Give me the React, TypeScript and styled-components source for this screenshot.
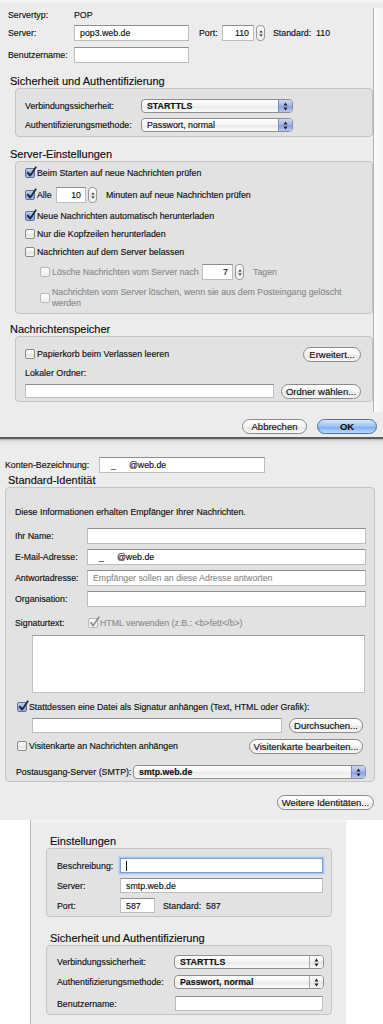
import React from 'react'
import styled, { createGlobalStyle, css } from 'styled-components'

const GlobalStyle = createGlobalStyle`
  html, body {
    margin: 0;
    padding: 0;
    background: #ffffff;
  }
  body {
    font-family: 'Liberation Sans', Arial, sans-serif;
    font-size: 8.8px;
    color: #111111;
    -webkit-text-stroke: 0.15px currentColor;
  }
  * {
    box-sizing: border-box;
  }
`

const Arrows = ({ w = 5, h = 9 }: { w?: number; h?: number }) => (
  <ArrowSvg width={w} height={h} viewBox="0 0 5 9">
    <path d="M2.5 0.6 L4.5 3.4 L0.5 3.4 Z M2.5 8.4 L4.5 5.6 L0.5 5.6 Z" />
  </ArrowSvg>
)

const CheckBox = ({ checked, disabled }: { checked?: boolean; disabled?: boolean }) => (
  <Tick $checked={checked} $disabled={disabled}>
    {checked && (
      <TickMark viewBox="0 0 11 12">
        <path d="M1.8 6.6 L4.2 9.6 L9.8 1.2" />
      </TickMark>
    )}
  </Tick>
)

const Select = ({ w, value, bold, active = true }: { w: number; value: string; bold?: boolean; active?: boolean }) => (
  <Popup $w={w} $bold={bold}>
    <PopupText>{value}</PopupText>
    <PopupCap $active={active}>
      <Arrows />
    </PopupCap>
  </Popup>
)

const Stepper = () => (
  <StepperBox>
    <Arrows w={4} h={9} />
  </StepperBox>
)

// account address with the local part blanked out, as in the screenshot
const Address = () => (
  <>
    <span>_</span>
    <Domain>@web.de</Domain>
  </>
)

export default function App() {
  return (
    <Page>
      <GlobalStyle />

      <Window $h={439} $edge>
        <TopArea>
          <Main>
            <Line>
              <Label $w={66}>Servertyp:</Label>
              <span>POP</span>
            </Line>
            <Line $mt={2}>
              <Label $w={66}>Server:</Label>
              <Field $w={115}>pop3.web.de</Field>
              <Label $w={23} $ml={10}>Port:</Label>
              <Field $w={32} $align="flex-end">110</Field>
              <Stepper />
              <Label $ml={8} $w={43}>Standard:</Label>
              <span>110</span>
            </Line>
            <Line $mt={6}>
              <Label $w={66}>Benutzername:</Label>
              <Field $w={115} />
            </Line>

            <GroupTitle $mt={11} $pl={2}>Sicherheit und Authentifizierung</GroupTitle>
            <GroupBox $ml={7} $w={358} $pt={10} $pb={4} $pl={9}>
              <Line $h={14}>
                <Label $w={116}>Verbindungssicherheit:</Label>
                <Select w={152} value="STARTTLS" bold />
              </Line>
              <Line $h={14} $mt={5}>
                <Label $w={116}>Authentifizierungsmethode:</Label>
                <Select w={152} value="Passwort, normal" />
              </Line>
            </GroupBox>

            <GroupTitle $mt={10} $pl={2}>Server-Einstellungen</GroupTitle>
            <GroupBox $ml={7} $w={358} $pt={3} $pb={4} $pl={9}>
              <Line>
                <CheckBox checked />
                <span>Beim Starten auf neue Nachrichten prüfen</span>
              </Line>
              <Line $mt={6}>
                <CheckBox checked />
                <Label $w={19}>Alle</Label>
                <Field $w={30} $align="flex-end">10</Field>
                <Stepper />
                <Label $ml={9}>Minuten auf neue Nachrichten prüfen</Label>
              </Line>
              <Line $mt={5}>
                <CheckBox checked />
                <span>Neue Nachrichten automatisch herunterladen</span>
              </Line>
              <Line $mt={2}>
                <CheckBox />
                <span>Nur die Kopfzeilen herunterladen</span>
              </Line>
              <Line $mt={2}>
                <CheckBox />
                <span>Nachrichten auf dem Server belassen</span>
              </Line>
              <Line $mt={4} $pl={15} $muted>
                <CheckBox disabled />
                <Label $w={150}>Lösche Nachrichten vom Server nach</Label>
                <Field $w={31} $align="flex-end">7</Field>
                <Stepper />
                <Label $ml={9}>Tagen</Label>
              </Line>
              <Line $mt={7} $h={22} $pl={15} $muted>
                <CheckBox disabled />
                <Wrapped>
                  Nachrichten vom Server löschen, wenn sie aus dem Posteingang gelöscht
                  <br />
                  werden
                </Wrapped>
              </Line>
            </GroupBox>

            <GroupTitle $mt={8} $pl={2}>Nachrichtenspeicher</GroupTitle>
            <GroupBox $ml={7} $w={358} $pt={10} $pb={3} $pl={9} $pr={11}>
              <Line $h={14}>
                <CheckBox />
                <span>Papierkorb beim Verlassen leeren</span>
                <PushButton $w={58} $ml="auto">Erweitert...</PushButton>
              </Line>
              <Line $h={14} $mt={5}>
                <span>Lokaler Ordner:</span>
              </Line>
              <Line $h={14} $mt={4}>
                <Field $w={249} $h={14} />
                <PushButton $w={80} $ml="auto">Ordner wählen...</PushButton>
              </Line>
            </GroupBox>
          </Main>
          <Track />
        </TopArea>

        <ButtonBar>
          <PushButton $w={65}>Abbrechen</PushButton>
          <PushButton $w={60} $primary>OK</PushButton>
        </ButtonBar>
      </Window>

      <Window $h={381} $shade>
        <Line $mt={18} $pl={5}>
          <Label $w={94}>Konten-Bezeichnung:</Label>
          <Field $w={166} $pl={11}>
            <Address />
          </Field>
        </Line>

        <GroupTitle $pl={8}>Standard-Identität</GroupTitle>
        <GroupBox $ml={5} $w={370} $pt={17} $pb={2} $pl={9} $pr={8}>
          <Line $h={14}>
            <span>Diese Informationen erhalten Empfänger Ihrer Nachrichten.</span>
          </Line>
          <Line $mt={9}>
            <Label $w={72}>Ihr Name:</Label>
            <Field $w={279} />
          </Line>
          <Line $mt={5}>
            <Label $w={72}>E-Mail-Adresse:</Label>
            <Field $w={279} $pl={11}>
              <Address />
            </Field>
          </Line>
          <Line $mt={5}>
            <Label $w={72}>Antwortadresse:</Label>
            <Field $w={279}>
              <Hint>Empfänger sollen an diese Adresse antworten</Hint>
            </Field>
          </Line>
          <Line $mt={5}>
            <Label $w={72}>Organisation:</Label>
            <Field $w={279} />
          </Line>
          <Line $h={14} $mt={9}>
            <Label $w={73}>Signaturtext:</Label>
            <CheckBox checked disabled />
            <Hint>HTML verwenden (z.B.: &lt;b&gt;fett&lt;/b&gt;)</Hint>
          </Line>
          <TextArea />
          <Line $h={14} $mt={7} $pl={2}>
            <CheckBox checked />
            <span>Stattdessen eine Datei als Signatur anhängen (Text, HTML oder Grafik):</span>
          </Line>
          <Line $h={15} $mt={4} $pl={17}>
            <Field $w={250} $h={15} />
            <PushButton $w={74} $ml="7px">Durchsuchen...</PushButton>
          </Line>
          <Line $h={14} $mt={6} $pl={2}>
            <CheckBox />
            <span>Visitenkarte an Nachrichten anhängen</span>
            <PushButton $w={114} $ml="auto" $mr={3}>Visitenkarte bearbeiten...</PushButton>
          </Line>
          <Line $h={14} $mt={12} $pl={1}>
            <Label $w={117}>Postausgang-Server (SMTP):</Label>
            <Select w={233} value="smtp.web.de" bold />
          </Line>
        </GroupBox>

        <ButtonBar $mt={13} $pr={9}>
          <PushButton $w={97}>Weitere Identitäten...</PushButton>
        </ButtonBar>
      </Window>

      <Sheet>
        <GroupTitle $pl={19}>Einstellungen</GroupTitle>
        <GroupBox $ml={15} $w={286} $pt={9} $pb={3} $pl={10}>
          <Line $h={15}>
            <Label $w={63}>Beschreibung:</Label>
            <Field $w={203} $h={15} $focus>
              <Caret />
            </Field>
          </Line>
          <Line $h={15} $mt={5}>
            <Label $w={63}>Server:</Label>
            <Field $w={203} $h={15}>smtp.web.de</Field>
          </Line>
          <Line $h={15} $mt={5}>
            <Label $w={63}>Port:</Label>
            <Field $w={35} $h={15}>587</Field>
            <Label $ml={8} $w={43}>Standard:</Label>
            <span>587</span>
          </Line>
        </GroupBox>

        <GroupTitle $mt={14} $pl={19}>Sicherheit und Authentifizierung</GroupTitle>
        <GroupBox $ml={15} $w={286} $pt={9} $pb={3} $pl={10}>
          <Line $h={14}>
            <Label $w={117}>Verbindungssicherheit:</Label>
            <Select w={150} value="STARTTLS" bold active={false} />
          </Line>
          <Line $h={14} $mt={6}>
            <Label $w={117}>Authentifizierungsmethode:</Label>
            <Select w={150} value="Passwort, normal" bold active={false} />
          </Line>
          <Line $h={15} $mt={7}>
            <Label $w={118}>Benutzername:</Label>
            <Field $w={148} $h={15} />
          </Line>
        </GroupBox>
      </Sheet>
    </Page>
  )
}

const Page = styled.div`
  width: 383px;
  height: 1024px;
  overflow: hidden;
  display: flex;
  flex-direction: column;
`

const Window = styled.section<{ $h: number; $edge?: boolean; $shade?: boolean }>`
  flex: none;
  height: ${p => p.$h}px;
  display: flex;
  flex-direction: column;
  background: linear-gradient(#f7f7f7, #ececec 5px);
  ${p =>
    p.$edge &&
    css`
      border-bottom: 2px solid #5b5b5b;
    `}
  ${p =>
    p.$shade &&
    css`
      background: linear-gradient(#b4b4b4, #dedede 2px, #e9e9e9 5px, #ececec 8px);
    `}
`

const TopArea = styled.div`
  flex: none;
  height: 412px;
  display: flex;
`

const Main = styled.div`
  flex: 1;
  display: flex;
  flex-direction: column;
  padding: 7px 0 0 8px;
`

const Track = styled.div`
  flex: none;
  width: 13px;
  margin-top: 8px;
  border-left: 1px solid #b2b2b2;
  background: linear-gradient(90deg, #fbfbfb, #f1f1f1);
`

const Line = styled.div<{ $mt?: number; $h?: number; $pl?: number; $muted?: boolean }>`
  flex: none;
  display: flex;
  align-items: center;
  height: ${p => p.$h ?? 16}px;
  margin-top: ${p => p.$mt ?? 0}px;
  padding-left: ${p => p.$pl ?? 0}px;
  white-space: nowrap;
  color: ${p => (p.$muted ? '#8c8c8c' : 'inherit')};
`

const Label = styled.span<{ $w?: number; $ml?: number }>`
  flex: none;
  width: ${p => (p.$w ? `${p.$w}px` : 'auto')};
  margin-left: ${p => p.$ml ?? 0}px;
`

const Wrapped = styled.span`
  line-height: 11px;
  white-space: nowrap;
`

const Field = styled.div<{ $w: number; $h?: number; $align?: string; $pl?: number; $focus?: boolean }>`
  flex: none;
  display: flex;
  align-items: center;
  justify-content: ${p => p.$align ?? 'flex-start'};
  width: ${p => p.$w}px;
  height: ${p => p.$h ?? 16}px;
  padding: 0 4px 0 ${p => p.$pl ?? 5}px;
  background: #ffffff;
  border: 1px solid #bdbdbd;
  border-top-color: #8e8e8e;
  color: #111111;
  ${p =>
    p.$focus &&
    css`
      border-color: #7d9fd4;
      box-shadow: 0 0 0 1px #a9c4ea, 0 0 1px 2px #c8daf2;
    `}
`

const Domain = styled.span`
  margin-left: 13px;
`

const Hint = styled.span`
  color: #8f8f8f;
`

const Caret = styled.span`
  width: 1px;
  height: 10px;
  background: #111111;
`

const TextArea = styled.div`
  flex: none;
  margin: 5px 0 0 17px;
  width: 333px;
  height: 58px;
  background: #ffffff;
  border: 1px solid #c2c2c2;
  border-top-color: #9a9a9a;
`

const GroupTitle = styled.div<{ $mt?: number; $pl?: number }>`
  flex: none;
  height: 14px;
  line-height: 14px;
  margin-top: ${p => p.$mt ?? 0}px;
  padding-left: ${p => p.$pl ?? 0}px;
  font-size: 11px;
  color: #0d0d0d;
`

const GroupBox = styled.div<{ $ml: number; $w: number; $pt: number; $pb: number; $pl: number; $pr?: number }>`
  flex: none;
  display: flex;
  flex-direction: column;
  margin-left: ${p => p.$ml}px;
  width: ${p => p.$w}px;
  padding: ${p => `${p.$pt}px ${p.$pr ?? 8}px ${p.$pb}px ${p.$pl}px`};
  background: #e2e2e2;
  border: 1px solid #c4c4c4;
  border-radius: 4px;
`

const ArrowSvg = styled.svg`
  display: block;
  fill: #1e1e1e;
`

const Tick = styled.span<{ $checked?: boolean; $disabled?: boolean }>`
  position: relative;
  flex: none;
  width: 10px;
  height: 10px;
  margin-right: 2px;
  border: 1px solid #8a8a8a;
  border-radius: 2px;
  background: linear-gradient(#ffffff, #ececec 50%, #e1e1e1 51%, #f6f6f6);
  color: #1c2333;
  ${p =>
    p.$checked &&
    css`
      border-color: #5f729a;
      background: linear-gradient(#c3d3ef, #90a9da 50%, #7592cf 51%, #a8bfe8);
    `}
  ${p =>
    p.$disabled &&
    css`
      border-color: #b7b7b7;
      background: linear-gradient(#fbfbfb, #f0f0f0);
      color: #8e8e8e;
    `}
`

const TickMark = styled.svg`
  position: absolute;
  left: 0;
  top: -3px;
  width: 11px;
  height: 12px;
  fill: none;
  stroke: currentColor;
  stroke-width: 1.7;
  stroke-linecap: round;
  stroke-linejoin: round;
`

const StepperBox = styled.span`
  flex: none;
  display: flex;
  align-items: center;
  justify-content: center;
  width: 9px;
  height: 16px;
  margin-left: 2px;
  border: 1px solid #999999;
  border-radius: 4px;
  background: linear-gradient(#ffffff, #efefef 50%, #e3e3e3 51%, #f7f7f7);
`

const Popup = styled.div<{ $w: number; $bold?: boolean }>`
  flex: none;
  display: flex;
  align-items: center;
  width: ${p => p.$w}px;
  height: 14px;
  padding-left: 5px;
  border: 1px solid #8f8f8f;
  border-radius: 4px;
  overflow: hidden;
  background: linear-gradient(#ffffff, #f4f4f4 50%, #e9e9e9 51%, #fbfbfb);
  font-weight: ${p => (p.$bold ? 700 : 400)};
`

const PopupText = styled.span`
  flex: 1;
`

const PopupCap = styled.span<{ $active: boolean }>`
  flex: none;
  align-self: stretch;
  display: flex;
  align-items: center;
  justify-content: center;
  width: 14px;
  border-left: 1px solid ${p => (p.$active ? '#7b8cc0' : '#a9a9a9')};
  background: ${p =>
    p.$active
      ? 'linear-gradient(#cdd7f3, #a3b3e6 50%, #8c9fdf 51%, #b6c6f0)'
      : 'linear-gradient(#ffffff, #f0f0f0 50%, #e4e4e4 51%, #f8f8f8)'};
`

const ButtonBar = styled.div<{ $mt?: number; $pr?: number }>`
  flex: none;
  display: flex;
  justify-content: flex-end;
  gap: 10px;
  margin-top: ${p => p.$mt ?? 7}px;
  padding-right: ${p => p.$pr ?? 6}px;
`

const PushButton = styled.button<{ $w: number; $ml?: string; $mr?: number; $primary?: boolean }>`
  flex: none;
  width: ${p => p.$w}px;
  height: 15px;
  margin: 0 ${p => p.$mr ?? 0}px 0 ${p => p.$ml ?? '0'};
  padding: 0;
  border: 1px solid #8a8a8a;
  border-radius: 8px;
  background: linear-gradient(#ffffff, #f4f4f4 50%, #e5e5e5 51%, #f8f8f8);
  font-family: 'Liberation Sans', Arial, sans-serif;
  font-size: 9.5px;
  line-height: 13px;
  color: #111111;
  -webkit-text-stroke: 0.15px currentColor;
  white-space: nowrap;
  ${p =>
    p.$primary &&
    css`
      border-color: #50709f;
      background: linear-gradient(#d9e7fb, #9cc0f2 50%, #78aaf0 51%, #bcdafc);
      font-weight: 700;
    `}
`

const Sheet = styled.section`
  flex: none;
  display: flex;
  flex-direction: column;
  margin-left: 30px;
  width: 316px;
  height: 204px;
  padding-top: 14px;
  border-left: 1px solid #bcbcbc;
  background: linear-gradient(#f3f3f3, #ececec 4px);
`
